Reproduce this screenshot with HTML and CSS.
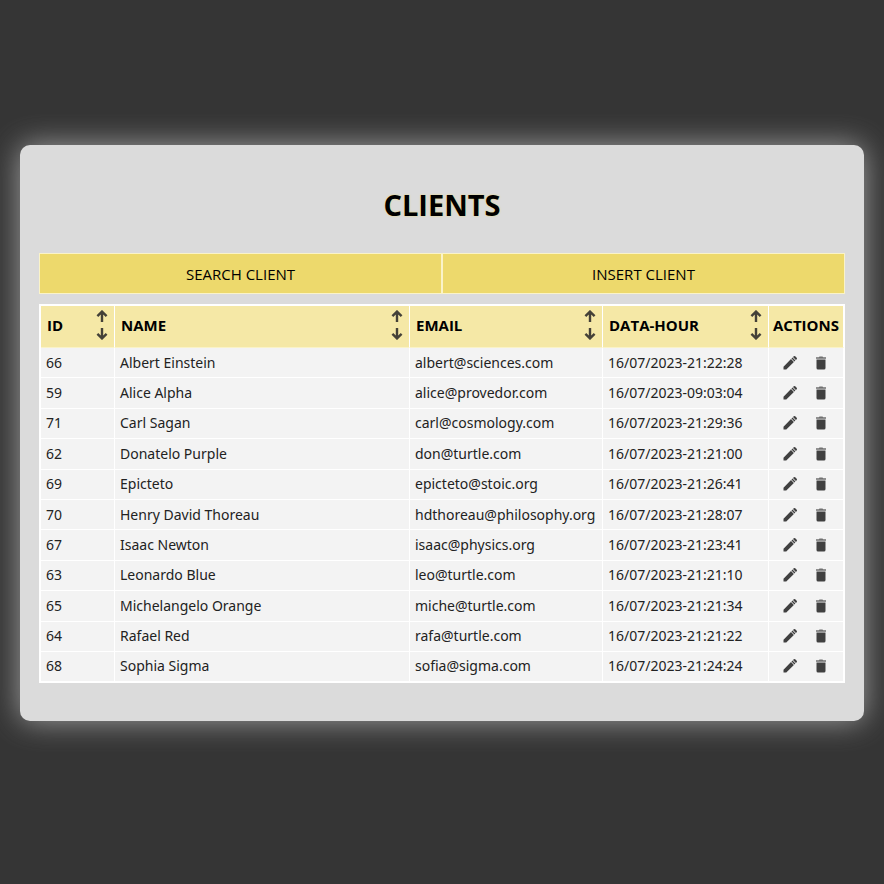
FILE: index.html
```
<!DOCTYPE html>
<html lang="en">
<head>
<meta charset="utf-8">
<meta name="viewport" content="width=device-width, initial-scale=1">
<title>Clients</title>
<link rel="stylesheet" href="styles.css">
<script src="app.js" defer></script>
</head>
<body>
<svg class="sprite">
  <symbol id="up" viewBox="0 0 12 12"><path d="M6 12V2M1.400 6.200 6 1.600l4.600 4.600"/></symbol>
  <symbol id="down" viewBox="0 0 12 12"><path d="M6 0v10M1.400 5.800 6 10.400l4.600-4.600"/></symbol>
  <symbol id="edit" viewBox="0 0 16 16"><path d="M1.500 11.700v2.800h2.800l7.600-7.500-2.900-2.900zM9.500 3.600l2.900 2.900 1-1-2.900-2.900zM11 2.100l2.900 2.900.8-.8a1 1 0 0 0 0-1.400l-1.500-1.500a1 1 0 0 0-1.400 0z"/></symbol>
  <symbol id="trash" viewBox="0 0 12 14"><path d="M1.500 3.500h9V12a1.500 1.500 0 0 1-1.500 1.500H3A1.500 1.500 0 0 1 1.500 12z"/><path class="lid" d="M1 1.200h2.800L4.500.5h3l.7.7H11v1.600H1z"/></symbol>
</svg>
<main class="panel">
  <h1 class="title">CLIENTS</h1>
  <nav class="toolbar">
    <button class="tool" type="button">SEARCH CLIENT</button>
    <button class="tool" type="button">INSERT CLIENT</button>
  </nav>
  <table class="clients">
    <colgroup><col class="col-id"><col><col class="col-email"><col class="col-date"><col class="col-actions"></colgroup>
    <thead>
      <tr>
        <th scope="col"><div class="head">ID<span class="sort"><button type="button" aria-label="Sort ID ascending"><svg><use href="#up"/></svg></button><button type="button" aria-label="Sort ID descending"><svg><use href="#down"/></svg></button></span></div></th>
        <th scope="col"><div class="head">NAME<span class="sort"><button type="button" aria-label="Sort name ascending"><svg><use href="#up"/></svg></button><button type="button" aria-label="Sort name descending"><svg><use href="#down"/></svg></button></span></div></th>
        <th scope="col"><div class="head">EMAIL<span class="sort"><button type="button" aria-label="Sort email ascending"><svg><use href="#up"/></svg></button><button type="button" aria-label="Sort email descending"><svg><use href="#down"/></svg></button></span></div></th>
        <th scope="col"><div class="head">DATA-HOUR<span class="sort"><button type="button" aria-label="Sort date ascending"><svg><use href="#up"/></svg></button><button type="button" aria-label="Sort date descending"><svg><use href="#down"/></svg></button></span></div></th>
        <th scope="col" class="head-actions">ACTIONS</th>
      </tr>
    </thead>
    <tbody id="rows"></tbody>
  </table>
</main>
</body>
</html>
```
FILE: styles.css
```
* { box-sizing: border-box; }

body {
  margin: 0;
  min-height: 100vh;
  padding: 0 20px 18px;
  display: flex;
  align-items: center;
  background: #353535;
  color: #000;
  font: 15px/20px "Open Sans", "Noto Sans", sans-serif;
}

button {
  border: 0;
  padding: 0;
  background: none;
  color: inherit;
  font: inherit;
  cursor: pointer;
}

.sprite {
  position: absolute;
  width: 0;
  height: 0;
}

.panel {
  width: 100%;
  padding: 40px 19px 38px;
  border-radius: 10px;
  background: #dbdbdb;
  box-shadow: 0 0 30px #a0a0a0;
}

.title {
  margin: 0 0 28px;
  text-align: center;
  font-size: 29px;
  line-height: 40px;
  font-weight: 700;
  text-shadow: 0 0 2px #edd96c;
}

.toolbar {
  display: grid;
  grid-template-columns: 1fr 1fr;
  margin-bottom: 10px;
}

.tool {
  height: 41px;
  border: 1px solid #faf3c8;
  background: #edd96c;
}

.clients {
  width: 100%;
  height: 379px;
  table-layout: fixed;
  border-collapse: separate;
  border-spacing: 0;
  border: 2px solid #fff;
  border-right-width: 1px;
}

.col-id { width: 74px; }
.col-email { width: 193px; }
.col-date { width: 166px; }
.col-actions { width: 75px; }

.clients th,
.clients td {
  padding: 0 5px;
  border-right: 1px solid #fff;
  border-bottom: 1px solid #fff;
  text-align: left;
  white-space: nowrap;
}

.clients th {
  height: 42px;
  padding: 0 6px 3px;
  border-bottom-color: #faf3c8;
  background: #f5e8a6;
  font-weight: 700;
}

.clients tbody tr:last-child td { border-bottom: 0; }

.clients td {
  background: #f3f3f3;
  color: #222;
  font-family: "Noto Sans", "Open Sans", sans-serif;
  font-size: 14px;
}

.head {
  display: flex;
  align-items: center;
  justify-content: space-between;
}

.clients .head-actions {
  padding: 0 0 3px;
  text-align: center;
}

.sort {
  display: flex;
  flex-direction: column;
  gap: 6px;
}

.sort button,
.sort svg {
  display: block;
  width: 12px;
  height: 12px;
}

.sort svg {
  fill: none;
  stroke: #444138;
  stroke-width: 2.4;
}

.actions {
  display: flex;
  justify-content: center;
  gap: 17px;
  padding-right: 3px;
}

.actions svg {
  display: block;
  width: 16px;
  height: 16px;
  fill: #404040;
}

.actions .trash {
  width: 12px;
}

.lid { fill: #707070; }
```
FILE: app.js
```
const clients = [
  [66, "Albert Einstein", "albert@sciences.com", "16/07/2023-21:22:28"],
  [59, "Alice Alpha", "alice@provedor.com", "16/07/2023-09:03:04"],
  [71, "Carl Sagan", "carl@cosmology.com", "16/07/2023-21:29:36"],
  [62, "Donatelo Purple", "don@turtle.com", "16/07/2023-21:21:00"],
  [69, "Epicteto", "epicteto@stoic.org", "16/07/2023-21:26:41"],
  [70, "Henry David Thoreau", "hdthoreau@philosophy.org", "16/07/2023-21:28:07"],
  [67, "Isaac Newton", "isaac@physics.org", "16/07/2023-21:23:41"],
  [63, "Leonardo Blue", "leo@turtle.com", "16/07/2023-21:21:10"],
  [65, "Michelangelo Orange", "miche@turtle.com", "16/07/2023-21:21:34"],
  [64, "Rafael Red", "rafa@turtle.com", "16/07/2023-21:21:22"],
  [68, "Sophia Sigma", "sofia@sigma.com", "16/07/2023-21:24:24"]
];

document.getElementById("rows").innerHTML = clients.map(row => `
  <tr>${row.map(value => `<td>${value}</td>`).join("")}
    <td><div class="actions">
      <button type="button" aria-label="Edit ${row[1]}"><svg><use href="#edit"/></svg></button>
      <button type="button" aria-label="Delete ${row[1]}"><svg class="trash"><use href="#trash"/></svg></button>
    </div></td>
  </tr>`).join("");
```
